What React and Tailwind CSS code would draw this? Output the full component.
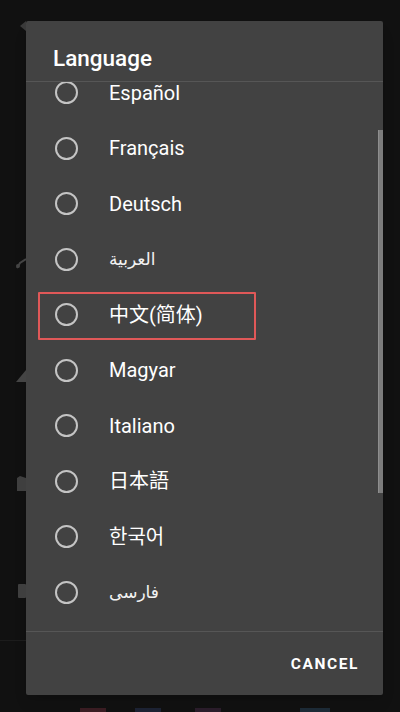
import React from 'react';

const languages = [
  { label: 'Español' },
  { label: 'Français' },
  { label: 'Deutsch' },
  { label: 'العربية', rtl: true },
  { label: '中文(简体)' },
  { label: 'Magyar' },
  { label: 'Italiano' },
  { label: '日本語' },
  { label: '한국어' },
  { label: 'فارسی', rtl: true },
];

const Radio = () => (
  <span className="w-[23px] h-[23px] rounded-full border-2 border-[#c4c4c4] shrink-0" />
);

const App = () => {
  return (
    <div
      className="relative w-[400px] h-[712px] bg-[#111111] overflow-hidden"
      style={{ fontFamily: 'Roboto, "Noto Sans CJK SC", "DejaVu Sans", sans-serif' }}
    >
      {/* faint hints of the screen under the overlay */}
      <svg className="absolute left-0 top-0" width="26" height="712" viewBox="0 0 26 712">
        <path d="M26 21 L20 26 L26 31" fill="#3a3a3a" />
        <path d="M17 268 L20 263 L26 259" stroke="#444" strokeWidth="2" fill="none" />
        <circle cx="18" cy="266" r="2" fill="#444" />
        <path d="M16 382 L26 370 L26 382 Z" fill="#444" />
        <path d="M17 478 L20 476 L26 478 L26 491 L17 491 Z" fill="#3f3f3f" />
        <rect x="18" y="584" width="8" height="14" rx="1" fill="#3f3f3f" />
        <rect x="0" y="640" width="26" height="1" fill="#1c1c1c" />
      </svg>
      <div className="absolute left-[80px] top-[708px] w-[26px] h-[4px] bg-[#3a1c22]" />
      <div className="absolute left-[135px] top-[708px] w-[26px] h-[4px] bg-[#1c2233]" />
      <div className="absolute left-[195px] top-[708px] w-[26px] h-[4px] bg-[#2a1c2a]" />
      <div className="absolute left-[300px] top-[708px] w-[30px] h-[4px] bg-[#1c2a36]" />

      <div className="pt-[21px] pl-[26px]">
        <div className="w-[357px] h-[674px] bg-[#424242] rounded-[2px] shadow-lg flex flex-col">
          <div className="h-[60px] flex items-center pt-[14px] pl-[27px]">
            <span className="text-white text-[22.5px] font-medium leading-none">
              Language
            </span>
          </div>
          <div className="h-px bg-[#565656]" />

          <div className="relative h-[549px] overflow-hidden">
            <div className="-mt-[17px]">
              {languages.map((lang) => (
                <div key={lang.label} className="h-[55.5px] flex items-center pl-[29px]">
                  <Radio />
                  <span
                    className={
                      lang.rtl
                        ? 'ml-[31px] text-[#f2f2f2] text-[17px] leading-none'
                        : 'ml-[31px] text-white text-[20px] leading-none'
                    }
                  >
                    {lang.label}
                  </span>
                </div>
              ))}
            </div>
            {/* highlight box */}
            <div className="absolute left-[12px] top-[210px] w-[218px] h-[48px] border-2 border-[#e05858] rounded-[1px]" />
            {/* scrollbar */}
            <div className="absolute right-0 top-[48px] w-[5px] h-[363px] bg-[#7c7c7c] border-l border-[#8e8e8e]" />
          </div>

          <div className="h-px bg-[#565656]" />
          <div className="flex-1 flex items-center justify-end pr-[24px] pt-[3px]">
            <span className="text-white text-[15.5px] font-bold tracking-[1.6px] leading-none">
              CANCEL
            </span>
          </div>
        </div>
      </div>
    </div>
  );
};

export default App;
